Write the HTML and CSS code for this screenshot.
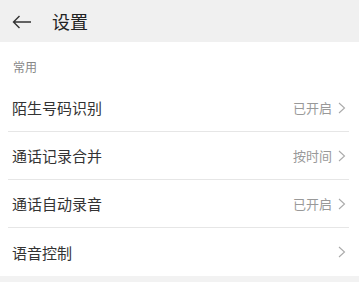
FILE: index.html
```html
<!DOCTYPE html>
<html lang="zh">
<head>
    <meta charset="UTF-8">
    <meta name="viewport" content="width=device-width, initial-scale=1.0">
    <title>设置</title>
    <link rel="stylesheet" href="styles.css">
</head>
<body>
    <div class="header">
        <svg class="back" width="20" height="14" viewBox="0 0 20 14">
            <path d="M19 7H1.5M7.5 1L1.5 7l6 6" fill="none" stroke="#333" stroke-width="1.4"/>
        </svg>
        <h1>设置</h1>
    </div>

    <div class="section-title">常用</div>

    <div class="list">
        <div class="row">
            <span class="label">陌生号码识别</span>
            <span class="value">已开启</span>
            <svg class="chevron" width="8" height="12" viewBox="0 0 8 12"><path d="M1 1l5.5 5L1 11" fill="none" stroke="#aaa" stroke-width="1.1"/></svg>
        </div>
        <div class="row">
            <span class="label">通话记录合并</span>
            <span class="value">按时间</span>
            <svg class="chevron" width="8" height="12" viewBox="0 0 8 12"><path d="M1 1l5.5 5L1 11" fill="none" stroke="#aaa" stroke-width="1.1"/></svg>
        </div>
        <div class="row">
            <span class="label">通话自动录音</span>
            <span class="value">已开启</span>
            <svg class="chevron" width="8" height="12" viewBox="0 0 8 12"><path d="M1 1l5.5 5L1 11" fill="none" stroke="#aaa" stroke-width="1.1"/></svg>
        </div>
        <div class="row last">
            <span class="label">语音控制</span>
            <span class="value"></span>
            <svg class="chevron" width="8" height="12" viewBox="0 0 8 12"><path d="M1 1l5.5 5L1 11" fill="none" stroke="#aaa" stroke-width="1.1"/></svg>
        </div>
    </div>
    <div class="footer-gap"></div>
</body>
</html>
```

FILE: styles.css
```css
body {
    margin: 0;
    font-family: "Noto Sans CJK SC", "Noto Sans", sans-serif;
    background-color: white;
    color: #333;
}
.header {
    height: 42px;
    background-color: #f0f0f0;
    display: flex;
    align-items: center;
    padding-left: 12px;
}
.header .back {
    margin-right: 20px;
    margin-top: 1px;
}
.header h1 {
    margin: 0;
    font-size: 18px;
    font-weight: normal;
    color: #222;
}
.section-title {
    height: 42px;
    box-sizing: border-box;
    padding: 17px 0 0 13px;
    font-size: 12px;
    line-height: 16px;
    color: #888;
}
.list {
    margin: 0 10px 0 8px;
}
.row {
    height: 48px;
    box-sizing: border-box;
    border-bottom: 1px solid #e6e6e6;
    display: flex;
    align-items: center;
    padding: 0 3px 0 4px;
}
.row.last {
    border-bottom: none;
}
.row .label {
    flex: 1;
    font-size: 15px;
    color: #333;
}
.row .value {
    font-size: 13px;
    color: #999;
    margin-right: 6px;
}
.footer-gap {
    height: 10px;
    background-color: #f2f2f2;
}
```
